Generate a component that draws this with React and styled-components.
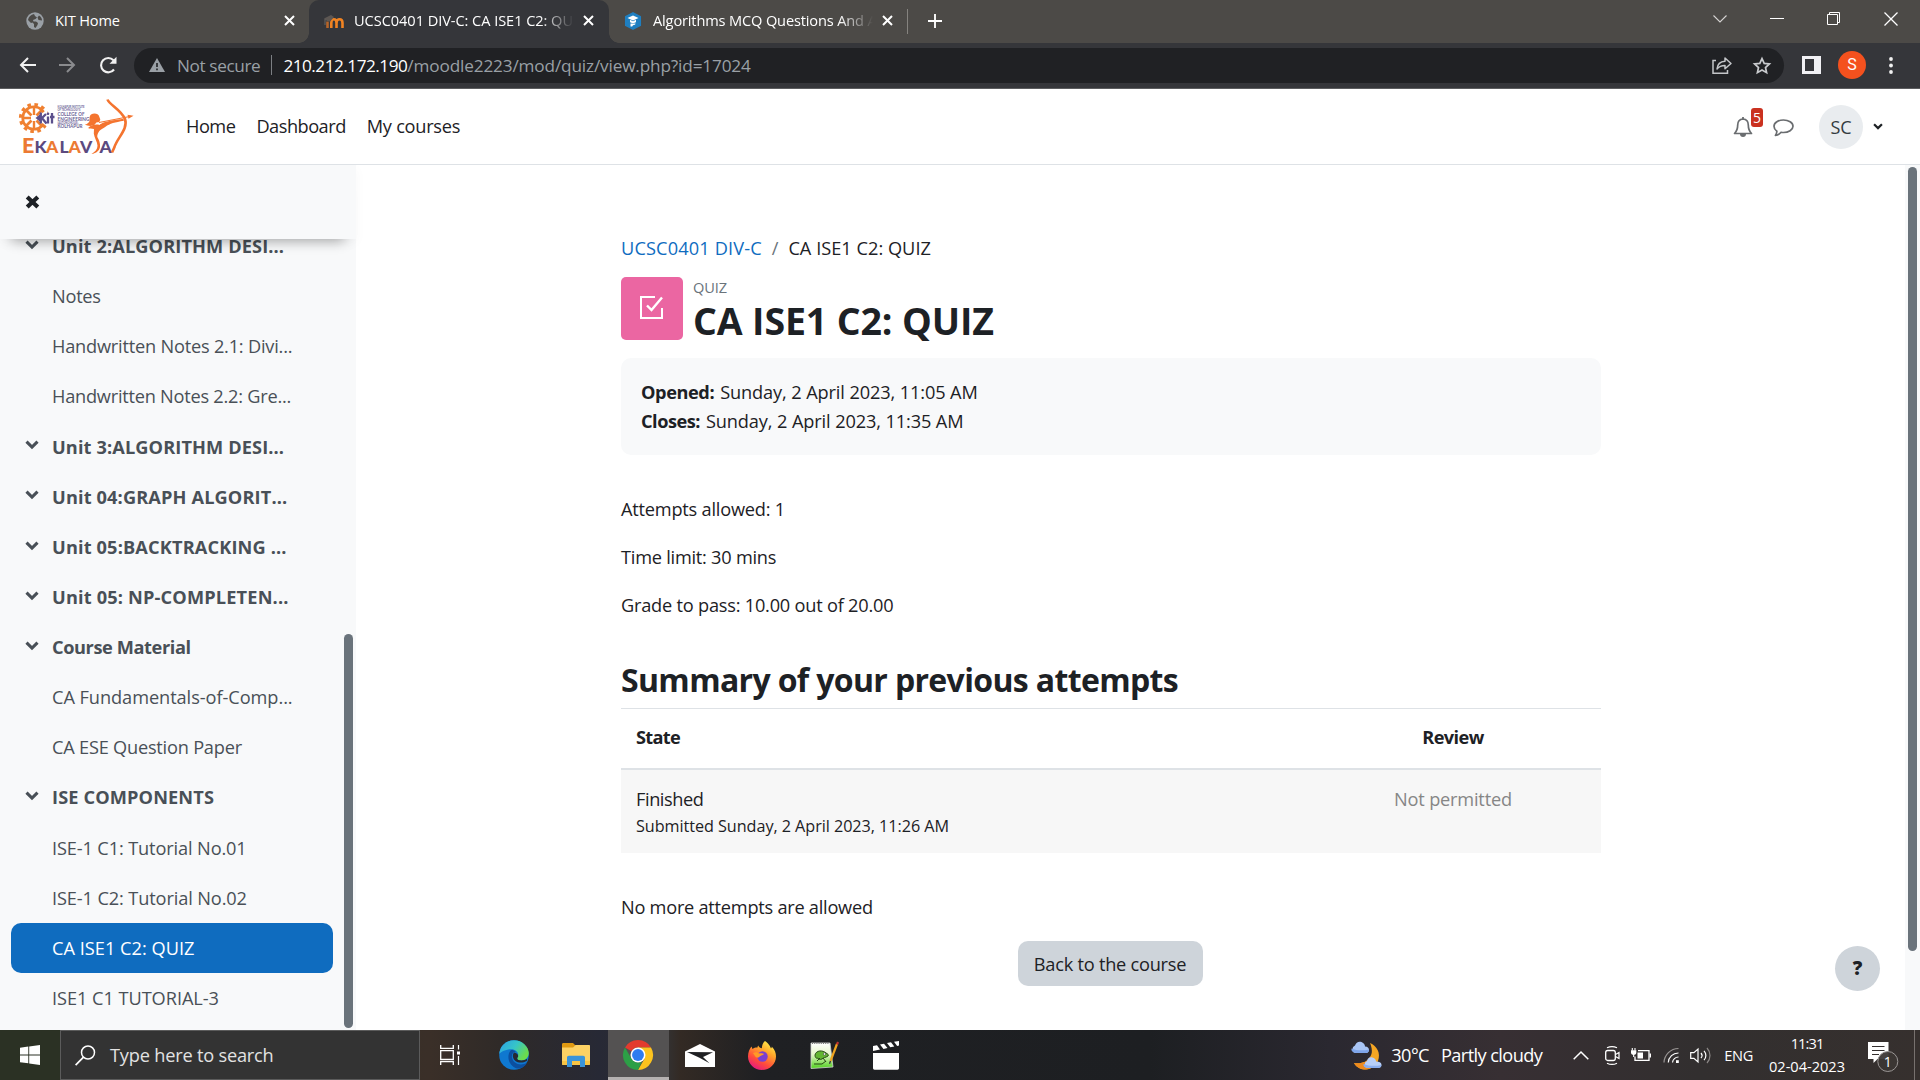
import React from 'react';
import styled, { createGlobalStyle, css } from 'styled-components';

const Global = createGlobalStyle`
  * { box-sizing: border-box; }
  html, body { margin: 0; padding: 0; overflow: hidden; }
  body { font-family: "Open Sans", "Noto Sans", sans-serif; background: #fff; }
`;

const Screen = styled.div`
  width: 1920px;
  height: 1080px;
  display: flex;
  flex-direction: column;
  overflow: hidden;
  color: #1d2125;
`;

const Text = styled.span`
  white-space: nowrap;
  font-size: ${p => p.$size || 18.2}px;
  font-weight: ${p => (p.$bold ? 700 : 400)};
  letter-spacing: ${p => p.$ls || 0}px;
  color: ${p => p.$color || 'inherit'};
  margin-left: ${p => p.$ml || 0}px;
`;

const Svg = styled.svg`
  display: block;
  flex: none;
  margin-left: ${p => p.$ml || 0}px;
  margin-top: ${p => p.$mt || 0}px;
  overflow: visible;
`;

/* ---------- browser chrome ---------- */
const TabStrip = styled.div`
  height: 43px;
  flex: none;
  display: flex;
  background: #4c4a47;
  color: #fff;
`;
const Tab = styled.div`
  position: relative;
  width: ${p => p.$w}px;
  height: 43px;
  padding: 0 ${p => p.$pr}px 2px ${p => p.$pl}px;
  display: flex;
  align-items: center;
  ${p => p.$active && css`
    background: #35363a;
    border-radius: 10px 10px 0 0;
    &::before, &::after {
      content: '';
      position: absolute;
      bottom: 0;
      width: 10px;
      height: 10px;
    }
    &::before { left: -10px; background: radial-gradient(circle at 0 0, transparent 9.5px, #35363a 10px); }
    &::after { right: -10px; background: radial-gradient(circle at 100% 0, transparent 9.5px, #35363a 10px); }
  `}
`;
const TabTitle = styled(Text)`
  flex: 1;
  overflow: hidden;
  margin-right: 9px;
  padding-bottom: 2px;
  ${p => p.$fade && css`mask-image: linear-gradient(to right, #000 calc(100% - 34px), transparent);`}
`;
const TabDivider = styled.div`
  width: 1px;
  height: 25px;
  margin-top: 9px;
  background: #85837f;
`;
const WindowButtons = styled.div`
  margin-left: auto;
  height: 38px;
  display: flex;
  align-items: center;
  padding-right: 22px;
  gap: 43px;
`;
const Toolbar = styled.div`
  height: 46px;
  flex: none;
  display: flex;
  align-items: center;
  background: #35363a;
  border-bottom: 1px solid #5c5d5f;
  padding: 0 24px 1px 19px;
`;
const Omnibox = styled.div`
  width: 1650px;
  height: 35px;
  margin: 0 18px 0 17px;
  border-radius: 18px;
  background: #202124;
  display: flex;
  align-items: center;
  padding: 0 13px 0 15px;
`;
const OmniDivider = styled.div`
  width: 1px;
  height: 20px;
  margin: 0 11px 0 11px;
  background: #7c7f83;
`;
const Spacer = styled.div`flex: 1;`;
const Profile = styled.div`
  width: 28px;
  height: 28px;
  margin-left: 17px;
  border-radius: 50%;
  background: #f4511e;
  color: #fff;
  font: 16px/28px Roboto, sans-serif;
  text-align: center;
`;

/* ---------- site header ---------- */
const SiteHeader = styled.header`
  height: 76px;
  flex: none;
  display: flex;
  align-items: center;
  border-bottom: 1px solid #dee2e6;
  background: #fff;
  padding: 0 37px 0 20px;
`;
const Nav = styled.nav`
  display: flex;
  gap: 21px;
  margin-left: 52px;
  padding-bottom: 2px;
`;
const Alerts = styled.div`
  position: relative;
`;
const Badge = styled.span`
  position: absolute;
  left: 18px;
  top: -9px;
  width: 12px;
  height: 19px;
  border-radius: 3px;
  background: #ca3120;
  color: #fff;
  font-size: 14px;
  line-height: 19px;
  text-align: center;
`;
const UserCircle = styled.div`
  width: 44px;
  height: 44px;
  margin: 0 10px 0 25px;
  border-radius: 50%;
  background: #e9ecef;
  display: flex;
  align-items: center;
  justify-content: center;
  color: #343a40;
`;

/* ---------- page ---------- */
const Page = styled.div`
  height: 865px;
  flex: none;
  display: flex;
`;
const Drawer = styled.aside`
  width: 356px;
  position: relative;
  z-index: 1;
  display: flex;
  flex-direction: column;
  background: #f8f9fa;
`;
const DrawerHead = styled.div`
  height: 74px;
  flex: none;
  position: relative;
  z-index: 1;
  display: flex;
  align-items: center;
  padding-left: 25px;
  background: #f8f9fa;
  box-shadow: 0 14px 12px -12px rgba(0, 0, 0, 0.33), 0 4px 12px rgba(0, 0, 0, 0.03);
  clip-path: inset(0 -12px -24px 0);
`;
const DrawerBody = styled.div`
  flex: 1;
  min-height: 0;
  display: flex;
`;
const IndexList = styled.div`
  width: 344px;
  height: 791px;
  overflow: hidden;
  display: flex;
  flex-direction: column;
  justify-content: flex-end;
  padding: 0 11px 7px 11px;
`;
const IndexRow = styled.div`
  height: 50.125px;
  flex: none;
  display: flex;
  align-items: center;
  border-radius: 10px;
  color: ${p => (p.$active ? '#fff' : '#495057')};
  background: ${p => (p.$active ? '#0f6cbf' : 'transparent')};
`;
const Marker = styled.div`
  width: 41px;
  flex: none;
  padding: 0 0 3px 14px;
`;
const DrawerThumb = styled.div`
  width: 9px;
  height: 394px;
  margin-top: 395px;
  border-radius: 5px;
  background: #6a737b;
`;
const Main = styled.main`
  width: 1549px;
  padding: 69px 304px 0 265px;
  position: relative;
  background: #fff;
  display: flex;
  flex-direction: column;
  align-items: stretch;
`;
const PageTrack = styled.div`
  width: 15px;
  background: #f8f9fa;
  padding: 2px 3px;
`;
const PageThumb = styled.div`
  height: 784px;
  border-radius: 5px;
  background: #6a737b;
`;
const Crumbs = styled.div`
  height: 28px;
  line-height: 28px;
  display: flex;
`;
const ActivityHead = styled.div`
  margin-top: 14px;
  height: 67px;
  display: flex;
`;
const ActivityIcon = styled.div`
  width: 62px;
  height: 63px;
  margin: 1px 10px 0 0;
  padding: 0 1px 2px 0;
  border-radius: 5px;
  background: #eb66a2;
  display: flex;
  align-items: center;
  justify-content: center;
`;
const Kind = styled.div`
  line-height: 22px;
  color: #6a737b;
  display: flex;
`;
const Title = styled.h1`
  margin: 0;
  font-size: 37.5px;
  line-height: 46px;
  letter-spacing: -0.13px;
  white-space: nowrap;
`;
const Dates = styled.div`
  margin-top: 15px;
  height: 97px;
  padding: 19.5px 20px;
  border-radius: 10px;
  background: #f8f9fa;
  line-height: 29px;
`;
const DateRow = styled.div`
  display: flex;
  height: 29px;
`;
const Facts = styled.div`
  margin-top: 40px;
  display: flex;
  flex-direction: column;
  gap: 20px;
  line-height: 28px;
`;
const SectionTitle = styled.h2`
  margin: 42px 0 0;
  font-size: 32px;
  line-height: 38px;
  letter-spacing: -0.65px;
  white-space: nowrap;
`;
const Table = styled.div`
  margin-top: 9px;
`;
const Row = styled.div`
  display: grid;
  grid-template-columns: 684px 296px;
  height: ${p => (p.$head ? 62 : 83)}px;
  padding-top: 15px;
  align-items: start;
  line-height: 28px;
  ${p => p.$head
    ? css`padding-top: 14px; border-top: 1px solid #dee2e6; border-bottom: 2px solid #dee2e6;`
    : css`background: #f7f7f7;`}
`;
const Cell = styled.div`
  display: flex;
  flex-direction: column;
  align-items: ${p => (p.$center ? 'center' : 'flex-start')};
  padding: 0 15px;
`;
const Small = styled(Text)`line-height: 27px;`;
const Button = styled.button`
  align-self: center;
  position: relative;
  margin: 20px 2px 0 0;
  width: 185px;
  height: 45px;
  flex: none;
  border: 0;
  border-radius: 10px;
  background: #ced4da;
  font-family: inherit;
  color: #1d2125;
  display: flex;
  align-items: center;
  justify-content: center;
`;
const Note = styled.div`
  margin-top: 40px;
  line-height: 28px;
  height: 28px;
`;
const Help = styled.div`
  position: absolute;
  right: 25px;
  bottom: 39px;
  width: 45px;
  height: 45px;
  border-radius: 50%;
  background: #ced4da;
  font-weight: 800;
  font-size: 19px;
  line-height: 45px;
  text-align: center;
`;

/* ---------- taskbar ---------- */
const Taskbar = styled.footer`
  height: 50px;
  flex: none;
  display: flex;
  align-items: center;
  color: #fff;
  background: linear-gradient(to right, #2b3124 0, #2b3124 60px, #3a2f28 430px, #2f2a28 500px, #272935 600px, #33302f 669px, #332a24 680px, #1f2023 760px, #1d1f22 1150px, #2a2830 1330px, #372f33 1500px, #322f2f 1700px, #36302e 1920px);
`;
const Start = styled.div`
  width: 60px;
  height: 50px;
  display: flex;
  align-items: center;
  justify-content: center;
`;
const Search = styled.div`
  width: 360px;
  height: 50px;
  border: 1px solid #5b5b5b;
  background: #333;
  color: #e2e2e2;
  display: flex;
  align-items: center;
  padding-left: 14px;
`;
const TaskApp = styled.div`
  width: ${p => p.$w || 62}px;
  height: 50px;
  flex: none;
  display: flex;
  align-items: center;
  justify-content: center;
  padding-right: ${p => p.$pr || 0}px;
  ${p => p.$active && css`
    background: #545252;
    box-shadow: inset 0 -3px 0 #b5b1b0;
  `}
`;
const Clock = styled.div`
  width: 76px;
  margin-left: 16px;
  display: flex;
  flex-direction: column;
  align-items: center;
  line-height: 23px;
  padding-bottom: 1px;
`;
const Edge = styled.div`
  width: 1px;
  height: 50px;
  margin: 0 5px 0 16px;
  background: #77716e;
`;

/* ---------- small icons ---------- */
const Cross = () => (
  <Svg width="11" height="11" viewBox="0 0 11 11"><path d="M1 1l9 9M10 1l-9 9" stroke="#fff" strokeWidth="2" /></Svg>
);
const ChevronDown = ({ color = '#495057', w = 14 }) => (
  <Svg width={w} height={w * 0.68} viewBox="0 0 14 9.5"><path d="M1.500 1.700L7 7.100l5.500-5.400" fill="none" stroke={color} strokeWidth="3.100" /></Svg>
);

const Logo = () => (
  <Svg width="114" height="56" viewBox="0 0 114 56">
    <circle cx="14" cy="19" r="11.300" fill="none" stroke="#f08030" strokeWidth="2.600" />
    <circle cx="14" cy="19" r="13.600" fill="none" stroke="#f08030" strokeWidth="3" strokeDasharray="3.600 3.520" />
    <path d="M14 8v8M14 30v-8M3 19h8" stroke="#f08030" strokeWidth="2.400" />
    <path d="M6.500 11.500l5 5M6.500 26.500l5-5M21.500 11.500l-5 5M21.500 26.500l-5-5" stroke="#f08030" strokeWidth="2.800" />
    <path d="M16.500 19l11-9v18z" fill="#fff" />
    <path d="M15.500 19l5.500-4.500v9z" fill="#5b4f8c" />
    <path d="M20.800 13.500v11M21.500 19.500l4.500-4.500M21.500 18.500l5 6M28 17.500v7M32 14v10.500M30 18h4.500" fill="none" stroke="#5b4f8c" strokeWidth="2.300" />
    <circle cx="28" cy="14.800" r="1.300" fill="#5b4f8c" />
    <g fontFamily="Lato, sans-serif" fontWeight="700" fill="#6a5f96">
      <text x="37.500" y="9.300" fontSize="3.200" textLength="27" lengthAdjust="spacingAndGlyphs">KOLHAPUR INSTITUTE</text>
      <text x="37.500" y="12.200" fontSize="3" textLength="23" lengthAdjust="spacingAndGlyphs">OF TECHNOLOGY&apos;S</text>
      <text x="37.500" y="17" fontSize="5.200" textLength="27" lengthAdjust="spacingAndGlyphs">COLLEGE OF</text>
      <text x="37.500" y="21.500" fontSize="5.200" textLength="32" lengthAdjust="spacingAndGlyphs">ENGINEERING</text>
      <text x="37.500" y="24.700" fontSize="3" textLength="21" lengthAdjust="spacingAndGlyphs">(AUTONOMOUS),</text>
      <text x="37.500" y="29.400" fontSize="5" textLength="25" lengthAdjust="spacingAndGlyphs">KOLHAPUR</text>
    </g>
    <g fontFamily="Lato, sans-serif" fontWeight="900" fontSize="17.500">
      <text x="2" y="54" fontSize="21.500" fill="#ec7a33">E</text>
      <text x="14.500" y="54" fill="#5b4a80">K</text>
      <text x="26" y="54" fill="#ec7a33">A</text>
      <text x="39.500" y="54" fill="#5b4a80">L</text>
      <text x="48.500" y="54" fill="#ec7a33">A</text>
      <text x="60" y="54" fill="#5b4a80">V</text>
      <text x="79.500" y="54" fill="#5b4a80">A</text>
    </g>
    <path d="M71 15.500c3-2 7.500-1.200 8.300 2.200l1 2.700-1 2.600-3 .6-1.500 2c-4 2.500-7.500.8-10 .2 3-1 5-2.600 4.800-5-.2-2 0-4.100 1.400-5.300z" fill="#f4742f" />
    <path d="M68 29c4-3.500 8.500-4 11.500-3 3-2.500 7-4 24-6.200l.4 2c-9 1.600-14 2.700-18.400 6-2.500 2-5 2.700-6.200 4.200-1.300 1.800-2.300 4-2 6 1.700 3 3.200 6.500 2.700 10-.5 3.500-3.500 6.300-8.500 7 3.500-2 6-5 6-8.300 0-4-3.400-8-3.700-12.200l.2-4.500c-2.500-.3-4.500 0-6-1z" fill="#f4742f" />
    <path d="M79 23.500l32-6.200" stroke="#f4742f" strokeWidth="1.100" />
    <path d="M107.500 15.800l6 .9-5 3z" fill="#f4742f" />
    <path d="M87.500.5c1.500 5 13.500 10 17.500 19.500 3.500 10-8 19-10.500 28l-2.500 5.500" fill="none" stroke="#f4742f" strokeWidth="2.600" />
  </Svg>
);

const EdgeIcon = () => (
  <Svg width="30" height="30" viewBox="0 0 30 30">
    <defs>
      <linearGradient id="eg" x1="0" y1="0" x2="1" y2="0.500"><stop offset="0" stopColor="#2b9fe6" /><stop offset="0.550" stopColor="#36c5c8" /><stop offset="1" stopColor="#6bdc4c" /></linearGradient>
    </defs>
    <circle cx="15" cy="15" r="14.800" fill="#0f78d0" />
    <path d="M.3 14C.8 6 7 .2 15 .2S29.800 6.500 29.800 13c0 4.500-3.500 7.400-7.300 7.400-3 0-4.300-1-4.300-2 0-.8 1-1.600 1-3.600 0-3-3-5.600-7-5.600C6.500 9.200 1.700 12 .3 14z" fill="url(#eg)" />
    <path d="M12 10c-4 4-4 14 4.500 18 4.500 1.800 9-1 11.500-5-4 2-9 2-12-.5-3.500-3-4-7-2-9.500 1-1.200 2-1.500 3-1.300C15.500 10.500 13.500 9.800 12 10z" fill="#0c4f9f" />
    <path d="M28 20.700c-3.500 2.300-8.500 2.600-11.500.3-3-2.500-3.300-6-1.500-8.500 2.500.2 4.200 1.800 4.200 3.500 0 1.200-1 1.600-1 2.400 0 1 1.500 2 4.300 2 2.400 0 4-.6 5.500-1.700z" fill="#272a33" />
  </Svg>
);
const FolderIcon = () => (
  <Svg width="28" height="24" viewBox="0 0 28 24">
    <path d="M0 1.500C0 .5.500 0 1.500 0H11l2.500 2.500L11 6H0z" fill="#e09a12" />
    <path d="M0 4.500h11L13.500 2H27c.6 0 1 .4 1 1v18.500H0z" fill="#fdd264" />
    <path d="M0 18h28v3c0 .6-.4 1-1 1H1c-.6 0-1-.4-1-1z" fill="#f7c444" />
    <path d="M5 24V14.500c0-1 .8-1.800 1.800-1.800h14.400c1 0 1.800.8 1.800 1.800V24h-5v-6H10v6z" fill="#3a94da" />
  </Svg>
);
const ChromeIcon = () => (
  <Svg width="30" height="30" viewBox="0 0 48 48">
    <path d="M24 0a24 24 0 0 1 20.800 12H24a12 12 0 0 0-10.400 6L3.200 12A24 24 0 0 1 24 0z" fill="#e33b2e" />
    <path d="M34.400 30L24 48a24 24 0 0 0 20.800-36H24z" fill="#fcc31e" />
    <path d="M3.200 12l10.400 18A12 12 0 0 0 30 34.400L24 48A24 24 0 0 1 3.200 12z" fill="#2c9f46" />
    <circle cx="24" cy="24" r="12" fill="#fff" /><circle cx="24" cy="24" r="9.500" fill="#2f7cf0" />
  </Svg>
);
const FirefoxIcon = () => (
  <Svg width="28" height="29" viewBox="0 0 28 29">
    <defs>
      <linearGradient id="fx" x1="0.800" y1="0" x2="0.250" y2="1"><stop offset="0" stopColor="#fff44f" /><stop offset="0.350" stopColor="#ffa52a" /><stop offset="0.700" stopColor="#ff4a3c" /><stop offset="1" stopColor="#e31587" /></linearGradient>
    </defs>
    <path d="M17 0c4 3 5 5 6 7.500.7-.4.9-1.200.7-2C27 9 28 12 28 15.500 28 23 21.800 29 14 29S0 23 0 15.500C0 11 1.500 8 3.500 5.500L4.500 8C6.500 6.500 8 6.300 9.500 6.500c0-.8.2-1.500.7-2 1 1.700 2 2.600 3.700 2.800C13.800 4.500 15 1.500 17 0z" fill="url(#fx)" />
    <circle cx="14.500" cy="15.500" r="5.200" fill="#7a3fd0" />
    <path d="M5 12c2.500-1.500 5-.8 6 .5 1.500-.4 4-.3 5 .5-1 1.500-3 1.300-4 2.300-1.500 2-4 1.500-5-.3z" fill="#ff9a26" />
  </Svg>
);
const NotepadIcon = () => (
  <Svg width="29" height="28" viewBox="0 0 29 28">
    <defs><linearGradient id="np" x1="0" y1="0" x2="0" y2="1"><stop offset="0" stopColor="#fff" /><stop offset="0.450" stopColor="#e5f6c8" /><stop offset="1" stopColor="#4fd01d" /></linearGradient></defs>
    <path d="M1 2h19l3 24-22 1.500z" fill="url(#np)" stroke="#cfd3cf" strokeWidth="0.800" />
    <path d="M2 2h17" stroke="#777" strokeWidth="2" strokeDasharray="1 1.200" />
    <path d="M5 14c1-5 8-5 11-2 2 1 3 2 2 3-3 2-4 1-6 3-2 1-4 0-4-1-2 1-3-1-3-3z" fill="#63b532" stroke="#264a14" strokeWidth="1" />
    <path d="M7 20l3-3M4 23h8l4-3M13 17l3 4" stroke="#264a14" strokeWidth="1" fill="none" />
    <circle cx="14.500" cy="13" r="1.200" fill="#fff" stroke="#222" strokeWidth="0.500" />
    <path d="M27 3l-6.500 17" stroke="#f0a41f" strokeWidth="2.200" />
    <path d="M28 1l-1 2.500" stroke="#c2332e" strokeWidth="2.200" />
    <path d="M20.500 20l-1 2.800" stroke="#333" strokeWidth="1.300" />
  </Svg>
);
const WeatherIcon = () => (
  <Svg width="31" height="29" viewBox="0 0 31 29">
    <path d="M19 2c7 3 11 10 8 18-3 7-12 11-19 7-2-1-4-3-5-5 8 1 13-1 16-6 3-4 2-9 0-14z" fill="#f5a623" />
    <path d="M3 22c8 1 13-1 16-6l7 6c-4 6-12 8-18 5-2-1-4-3-5-5z" fill="#ee8a1d" />
    <path d="M4 12a4 4 0 0 1 0-7.500C5 1 8 0 10.500 1S14 4 14 5.500c3 0 4 2 4 3.500s-1 3-3 3z" fill="#a9c5f5" />
    <path d="M5 12c-3-.3-5-2-4.500-4.500C5 9.500 12 10 18 8.500c0 2-1 3.500-3 3.500z" fill="#7fa5ea" />
    <path d="M16 27a3.800 3.800 0 0 1 0-7c.5-3 3-4.500 5.500-3.500 2 .5 3.500 2 3.500 4 3 0 5.500 1 5.500 3.300S29 27 27 27z" fill="#b7cff8" />
    <path d="M16 27c-2.500-.3-4-2-3.500-4 5 2 12 2.500 18 1-.3 2-1.500 3-3.500 3z" fill="#8aaeee" />
  </Svg>
);

const index = [
  { t: 'Unit 2:ALGORITHM DESI...', head: true, ls: 0.11 },
  { t: 'Notes', ls: -0.25 },
  { t: 'Handwritten Notes 2.1: Divi...', ls: -0.21 },
  { t: 'Handwritten Notes 2.2: Gre...', ls: -0.24 },
  { t: 'Unit 3:ALGORITHM DESI...', head: true, ls: 0.11 },
  { t: 'Unit 04:GRAPH ALGORIT...', head: true, ls: 0.13 },
  { t: 'Unit 05:BACKTRACKING ...', head: true, ls: 0.14 },
  { t: 'Unit 05: NP-COMPLETEN...', head: true, ls: 0.16 },
  { t: 'Course Material', head: true, ls: -0.4 },
  { t: 'CA Fundamentals-of-Comp...', ls: -0.06 },
  { t: 'CA ESE Question Paper', ls: -0.22 },
  { t: 'ISE COMPONENTS', head: true, ls: 0.12 },
  { t: 'ISE-1 C1: Tutorial No.01', ls: -0.13 },
  { t: 'ISE-1 C2: Tutorial No.02', ls: -0.12 },
  { t: 'CA ISE1 C2: QUIZ', ls: 0.02, active: true },
  { t: 'ISE1 C1 TUTORIAL-3', ls: -0.05 },
];

export default function App() {
  return (
    <Screen>
      <Global />
      <TabStrip>
        <Tab $w={309} $pl={26} $pr={14}>
          <Svg width="18" height="18" viewBox="0 0 18 18">
            <circle cx="9" cy="9" r="8.700" fill="#9aa0a6" />
            <path d="M8 2c-3 .5-5.500 3-6 6l3 3 1.500-.5L8 12v3l1.500 1 2-3 .5-2-2-1.500H7.500L7 8l2.500-1L11 5.500 9 4z M13 3.500l-1.500 2 1 2.500 3.500.5c0-2-1-4-3-5z" fill="#4c4a47" />
          </Svg>
          <TabTitle $size={14.6} $ls={-0.16} $ml={11}>KIT Home</TabTitle>
          <Cross />
        </Tab>
        <Tab $w={300} $pl={15} $pr={15} $active>
          <Svg width="20" height="14" viewBox="0 0 20 14" $mt={3}>
            <path d="M7.300 13V8c0-5 5.200-5 5.200 0v5M12.500 8c0-5 6-5 6 0v5" fill="none" stroke="#f08322" strokeWidth="2.600" />
            <path d="M3.500 13V6.500" fill="none" stroke="#b5652a" strokeWidth="2.600" />
            <path d="M0 3.500L7 0l3 2-4 4.500-3-.5z" fill="#5d5753" />
            <path d="M1 4v6" stroke="#6b6763" strokeWidth="1" />
          </Svg>
          <TabTitle $size={14.6} $ls={-0.06} $ml={10} $fade>UCSC0401 DIV-C: CA ISE1 C2: QUIZ</TabTitle>
          <Cross />
        </Tab>
        <Tab $w={298} $pl={15} $pr={14}>
          <Svg width="18" height="18" viewBox="0 0 18 18">
            <path d="M9 .8l7.300 3.800v8.800L9 17.200l-7.300-3.800V4.600z" fill="#1f7fc1" stroke="#1f7fc1" strokeWidth="1.500" strokeLinejoin="round" />
            <path d="M3.500 6L9 3.500 14.500 6 9 8.500z M6 7.800v2.200C7 11.300 11 11.300 12 10V7.800L9 9.300z M6.500 11.500h5c0 1.300-1 1.700-2.500 1.700l-.8 1.300H6.500z" fill="#fff" />
          </Svg>
          <TabTitle $size={14.6} $ls={-0.15} $ml={11} $fade>Algorithms MCQ Questions And Answers</TabTitle>
          <Cross />
        </Tab>
        <TabDivider />
        <Svg width="14" height="14" viewBox="0 0 15 15" $ml={20} $mt={14}><path d="M7.500 0v15M0 7.500h15" stroke="#fff" strokeWidth="2" /></Svg>
        <WindowButtons>
          <Svg width="14" height="8" viewBox="0 0 14 8"><path d="M.5.5L7 7 13.500.5" fill="none" stroke="#d5d4d3" strokeWidth="1.100" /></Svg>
          <Svg width="14" height="2" viewBox="0 0 14 2"><path d="M0 .5h14" stroke="#fff" strokeWidth="1" /></Svg>
          <Svg width="14" height="14" viewBox="0 0 14 14"><path d="M.5 2.500h10v10h-10zM2.500 2.500v-2h10v10h-2" fill="none" stroke="#fff" strokeWidth="1" /></Svg>
          <Svg width="14" height="14" viewBox="0 0 14 14"><path d="M.5.5l13 13M13.500.5l-13 13" stroke="#fff" strokeWidth="1.300" /></Svg>
        </WindowButtons>
      </TabStrip>

      <Toolbar>
        <Svg width="17" height="16" viewBox="0 0 17 16"><path d="M17 8H2M9 1L2 8l7 7" fill="none" stroke="#f1f1f1" strokeWidth="2" /></Svg>
        <Svg width="17" height="16" viewBox="0 0 17 16" $ml={23}><path d="M0 8h15M8 1l7 7-7 7" fill="none" stroke="#8a8b8e" strokeWidth="2" /></Svg>
        <Svg width="18" height="18" viewBox="0 0 18 18" $ml={23}>
          <path d="M15 13.500A7.200 7.200 0 1 1 14.500 4.200" fill="none" stroke="#f1f1f1" strokeWidth="2.100" />
          <path d="M17.500.8v7h-7z" fill="#f1f1f1" />
        </Svg>
        <Omnibox>
          <Svg width="16" height="14" viewBox="0 0 16 14"><path d="M8 0l8 14H0z" fill="#9aa0a6" /><path d="M8 5v4M8 10.500v1.800" stroke="#202124" strokeWidth="1.600" /></Svg>
          <Text $size={17.2} $ls={-0.38} $color="#9aa0a6" $ml={12}>Not secure</Text>
          <OmniDivider />
          <Text $size={17.2} $ls={-0.5} $color="#fff">210.212.172.190</Text>
          <Text $size={17.2} $ls={-0.15} $color="#9aa0a6">/moodle2223/mod/quiz/view.php?id=17024</Text>
          <Spacer />
          <Svg width="20" height="18" viewBox="0 0 20 18">
            <path d="M4 4.500H1v12.700h14.500V14" fill="none" stroke="#c4c6c9" strokeWidth="1.500" />
            <path d="M5 13c.5-5 3.500-7.500 8-7.700V2l6 5.500-6 5.300V9.500c-3.500 0-6 1-8 3.500z" fill="none" stroke="#c4c6c9" strokeWidth="1.500" strokeLinejoin="round" />
          </Svg>
          <Svg width="18" height="17" viewBox="0 0 18 17" $ml={21}><path d="M9 1.600l2.200 4.800 5.200.6-3.900 3.500 1.100 5.200L9 13.100l-4.600 2.600 1.100-5.200L1.600 7l5.200-.6z" fill="none" stroke="#c9cbce" strokeWidth="1.700" /></Svg>
        </Omnibox>
        <Svg width="19" height="18" viewBox="0 0 19 18"><path d="M0 0h19v18H0z" fill="#f1f1f4" /><path d="M3 3h9v12H3z" fill="#35363a" /></Svg>
        <Profile>S</Profile>
        <Svg width="4" height="17" viewBox="0 0 4 17" $ml={23}><circle cx="2" cy="2" r="1.900" fill="#f1f1f1" /><circle cx="2" cy="8.500" r="1.900" fill="#f1f1f1" /><circle cx="2" cy="15" r="1.900" fill="#f1f1f1" /></Svg>
      </Toolbar>

      <SiteHeader>
        <Logo />
        <Nav>
          <Text $ls={-0.5}>Home</Text>
          <Text $ls={-0.5}>Dashboard</Text>
          <Text $ls={-0.27}>My courses</Text>
        </Nav>
        <Spacer />
        <Alerts>
          <Svg width="20" height="20" viewBox="0 0 20 20">
            <path d="M10 2C6.500 2.300 4.700 4.700 4.700 8c0 4-1 6.300-3.200 8.500h17C16.300 14.300 15.300 12 15.300 8c0-3.300-1.800-5.700-5.300-6z" fill="none" stroke="#6a6d70" strokeWidth="1.700" strokeLinejoin="round" />
            <path d="M10 0v2.500" stroke="#6a6d70" strokeWidth="1.800" /><path d="M7 17h6a3 3 0 0 1-6 0z" fill="#6a6d70" />
          </Svg>
          <Badge>5</Badge>
        </Alerts>
        <Svg width="21" height="18" viewBox="0 0 21 18" $ml={20} $mt={3}>
          <path d="M10.500 1C15.500 1 20 3.700 20 7.200s-4.500 6.300-9.500 6.300c-1 0-1.700-.1-2.500-.2-1.500 1.700-3.300 2.900-5.600 3.200.9-1.200 1.400-2.500 1.500-4.200C2.200 11 1 9.200 1 7.200 1 3.700 5.500 1 10.500 1z" fill="none" stroke="#6a6d70" strokeWidth="1.700" strokeLinejoin="round" />
        </Svg>
        <UserCircle><Text $size={18}>SC</Text></UserCircle>
        <ChevronDown color="#1d2125" w={10} />
      </SiteHeader>

      <Page>
        <Drawer>
          <DrawerHead>
            <Svg width="15" height="14" viewBox="0 0 15 14"><path d="M2.200 2l10.600 10M12.800 2L2.200 12" stroke="#1d2125" strokeWidth="4.200" /></Svg>
          </DrawerHead>
          <DrawerBody>
            <IndexList>
              {index.map(r => (
                <IndexRow key={r.t} $active={r.active}>
                  <Marker>{r.head && <ChevronDown />}</Marker>
                  <Text $bold={r.head} $ls={r.ls}>{r.t}</Text>
                </IndexRow>
              ))}
            </IndexList>
            <DrawerThumb />
          </DrawerBody>
        </Drawer>
        <Main>
          <Crumbs>
            <Text $color="#0f6cbf" $ls={0.13}>UCSC0401 DIV-C</Text>
            <Text $color="#6a737b" $ml={10}>/</Text>
            <Text $ml={10} $ls={0.02}>CA ISE1 C2: QUIZ</Text>
          </Crumbs>
          <ActivityHead>
            <ActivityIcon>
              <Svg width="23" height="23" viewBox="0 0 23 23">
                <path d="M15 1H1v21h21V12" fill="none" stroke="#fff" strokeWidth="2" />
                <path d="M7 9.500l4.500 4.500L22 1.500" fill="none" stroke="#fff" strokeWidth="2.400" />
              </Svg>
            </ActivityIcon>
            <div>
              <Kind><Text $size={14.6} $ls={-0.1}>QUIZ</Text></Kind>
              <Title>CA ISE1 C2: QUIZ</Title>
            </div>
          </ActivityHead>
          <Dates>
            <DateRow><Text $bold $ls={-0.42}>Opened:</Text><Text $ml={6} $ls={-0.12}>Sunday, 2 April 2023, 11:05 AM</Text></DateRow>
            <DateRow><Text $bold $ls={-0.5}>Closes:</Text><Text $ml={6} $ls={-0.12}>Sunday, 2 April 2023, 11:35 AM</Text></DateRow>
          </Dates>
          <Facts>
            <Text $ls={-0.22}>Attempts allowed: 1</Text>
            <Text $ls={-0.24}>Time limit: 30 mins</Text>
            <Text $ls={-0.22}>Grade to pass: 10.00 out of 20.00</Text>
          </Facts>
          <SectionTitle>Summary of your previous attempts</SectionTitle>
          <Table>
            <Row $head>
              <Cell><Text $bold $ls={-0.68}>State</Text></Cell>
              <Cell $center><Text $bold $ls={-0.59}>Review</Text></Cell>
            </Row>
            <Row>
              <Cell>
                <Text $ls={-0.42}>Finished</Text>
                <Small $size={16.2} $ls={-0.05}>Submitted Sunday, 2 April 2023, 11:26 AM</Small>
              </Cell>
              <Cell $center><Text $ls={-0.2} $color="#868686">Not permitted</Text></Cell>
            </Row>
          </Table>
          <Note><Text $ls={-0.25}>No more attempts are allowed</Text></Note>
          <Button><Text $ls={-0.24}>Back to the course</Text></Button>
          <Help>?</Help>
        </Main>
        <PageTrack><PageThumb /></PageTrack>
      </Page>

      <Taskbar>
        <Start>
          <Svg width="20" height="20" viewBox="0 0 20 20"><path d="M0 2.800l8.300-1.200v7.900H0zM9.200 1.500L20 0v9.500H9.200zM0 10.400h8.300v7.900L0 17.200zM9.200 10.400H20V20L9.200 18.500z" fill="#fff" /></Svg>
        </Start>
        <Search>
          <Svg width="21" height="21" viewBox="0 0 21 21"><circle cx="13" cy="7.500" r="6.500" fill="none" stroke="#fff" strokeWidth="1.500" /><path d="M8.500 12.200L.6 20.200" stroke="#fff" strokeWidth="1.700" /></Svg>
          <Text $ls={-0.2} $ml={14}>Type here to search</Text>
        </Search>
        <TaskApp $w={61} $pr={2}>
          <Svg width="20" height="20" viewBox="0 0 20 20">
            <path d="M.7 0v3.300h12.600V0M.7 20v-3.500h12.600V20M.7 5.700h12.600v8.600H.7z" fill="none" stroke="#fff" strokeWidth="1.300" />
            <path d="M18.500 0v4.500M18.500 11v9" stroke="#fff" strokeWidth="1.200" /><path d="M17 6.500h3v3h-3z" fill="#fff" />
          </Svg>
        </TaskApp>
        <TaskApp $w={65}><EdgeIcon /></TaskApp>
        <TaskApp $pr={2}><FolderIcon /></TaskApp>
        <TaskApp $w={61} $pr={1} $active><ChromeIcon /></TaskApp>
        <TaskApp>
          <Svg width="30" height="23" viewBox="0 0 30 23"><path d="M0 7.500L15 0l15 7.500V23H0z" fill="#fff" /><path d="M2 8l26 .2-10 4.700 6.500 6.300L14 13.500z" fill="#1f2023" /></Svg>
        </TaskApp>
        <TaskApp><FirefoxIcon /></TaskApp>
        <TaskApp><NotepadIcon /></TaskApp>
        <TaskApp>
          <Svg width="26" height="29" viewBox="0 0 26 29">
            <path d="M0 12h26v15c0 1-.6 1.700-1.500 1.700h-23C.6 28.700 0 28 0 27z" fill="#fff" />
            <path d="M0 5l4-.8 3 4.300L0 10zM7 3.600l4-.8 3.500 4.200-4 .9zM14 2.100l4-.9 3.300 4.300-4 .8zM21 .7L26 0v4.500l-1.800.4z" fill="#fff" />
          </Svg>
        </TaskApp>
        <Spacer />
        <WeatherIcon />
        <Text $ml={9} $ls={-0.6}>30°C</Text>
        <Text $ml={12} $ls={-0.59}>Partly cloudy</Text>
        <Svg width="16" height="9" viewBox="0 0 16 9" $ml={31}><path d="M.7 8.300L8 1l7.300 7.300" fill="none" stroke="#fff" strokeWidth="1.500" /></Svg>
        <Svg width="15" height="19" viewBox="0 0 15 19" $ml={16}>
          <rect x="0.700" y="4.500" width="9.600" height="10" rx="2" fill="none" stroke="#fff" strokeWidth="1.300" />
          <path d="M10.500 8.500l3.500-2v6l-3.500-2M2 1.800C5 .3 9 .3 12 1.800M2 17.200c3 1.500 7 1.500 10 0" fill="none" stroke="#fff" strokeWidth="1.200" />
        </Svg>
        <Svg width="20" height="14" viewBox="0 0 20 14" $ml={11}>
          <path d="M7 2.600h11v9.800H4V8.500" fill="none" stroke="#fff" strokeWidth="1.300" /><path d="M6.500 4.500h5.500v6H6.500zM18.500 5.500H20v4h-1.500z" fill="#fff" />
          <path d="M1.300 0v2.500M4 0v2.500M2.650 6v3" stroke="#fff" strokeWidth="1.100" /><path d="M0 2.200h5.300v2.300a2.650 2.300 0 0 1-5.300 0z" fill="#fff" />
        </Svg>
        <Svg width="17" height="16" viewBox="0 0 17 16" $ml={12}>
          <path d="M9.500 15.500A6 6 0 0 1 15.500 10M5.300 15.500A10 10 0 0 1 15.500 6" fill="none" stroke="#fff" strokeWidth="1.200" />
          <path d="M1 15.500A14.500 14.500 0 0 1 15.500 1.500" fill="none" stroke="#9a9695" strokeWidth="1.200" /><path d="M13 13.200h2.800V16H13z" fill="#fff" />
        </Svg>
        <Svg width="21" height="17" viewBox="0 0 21 17" $ml={10}>
          <path d="M.7 5.700h3.200L8 2v13l-4.100-3.700H.7z" fill="none" stroke="#fff" strokeWidth="1.200" />
          <path d="M11 6c1.300 1.500 1.300 3.500 0 5M14 3.800c2.500 2.700 2.500 6.700 0 9.400" fill="none" stroke="#fff" strokeWidth="1.200" />
          <path d="M17 1c4 4.300 4 10.700 0 15" fill="none" stroke="#8b8786" strokeWidth="1.200" />
        </Svg>
        <Text $size={14.6} $ls={-0.35} $ml={13}>ENG</Text>
        <Clock>
          <Text $size={14.6} $ls={-0.9}>11:31</Text>
          <Text $size={14.6} $ls={-0.02}>02-04-2023</Text>
        </Clock>
        <Svg width="30" height="30" viewBox="0 0 30 30" $ml={23} $mt={4}>
          <path d="M0 0h20.500v17H9.500L5.500 21v-4H0z" fill="#fff" /><path d="M4 4.500h12.500M4 8.500h12.500M4 12.500h7" stroke="#35302f" strokeWidth="1.200" />
          <circle cx="19.800" cy="19.500" r="10" fill="#3b3634" fillOpacity="0.940" stroke="#9a9695" strokeWidth="1" />
          <text x="19.800" y="24.800" fontFamily="Open Sans" fontSize="14" fill="#fff" textAnchor="middle">1</text>
        </Svg>
        <Edge />
      </Taskbar>
    </Screen>
  );
}
